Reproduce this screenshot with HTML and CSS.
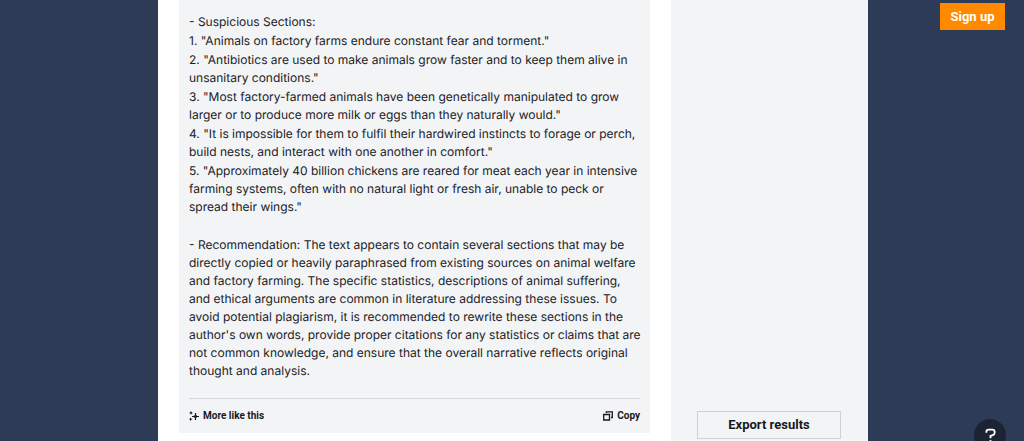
FILE: index.html
```html
<!DOCTYPE html>
<html lang="en">
<head>
<meta charset="utf-8">
<meta name="viewport" content="width=device-width, initial-scale=1">
<title>Plagiarism check results</title>
<link rel="stylesheet" href="styles.css">
</head>
<body>
<div class="page">
  <main class="panel">
    <section class="result">
      <div class="report">
        <p>- Suspicious Sections:</p>
        <p>1. "Animals on factory farms endure constant fear and torment."</p>
        <p>2. "Antibiotics are used to make animals grow faster and to keep them alive in unsanitary conditions."</p>
        <p>3. "Most factory-farmed animals have been genetically manipulated to grow larger or to produce more milk or eggs than they naturally would."</p>
        <p>4. "It is impossible for them to fulfil their hardwired instincts to forage or perch, build nests, and interact with one another in comfort."</p>
        <p>5. "Approximately 40 billion chickens are reared for meat each year in intensive farming systems, often with no natural light or fresh air, unable to peck or spread their wings."</p>
        <p class="recommendation">- Recommendation: The text appears to contain several sections that may be directly copied or heavily paraphrased from existing sources on animal welfare and factory farming. The specific statistics, descriptions of animal suffering, and ethical arguments are common in literature addressing these issues. To avoid potential plagiarism, it is recommended to rewrite these sections in the author's own words, provide proper citations for any statistics or claims that are not common knowledge, and ensure that the overall narrative reflects original thought and analysis.</p>
      </div>
      <div class="actions">
        <button class="action" type="button">
          <svg class="icon" viewBox="0 0 10 10" aria-hidden="true"><path d="M6.500 2v7M3 5.500h7" fill="none" stroke="currentColor" stroke-width="1.200"/><path d="M6.500 3 7.500 4.500 9 5.500 7.500 6.500 6.500 8 5.500 6.500 4 5.500 5.500 4.500zM2 0l.7 1.200 1.200.7-1.200.7L2 3.800l-.7-1.200L.1 1.900l1.200-.7zM1.600 6.400l.6 1.200 1.200.6-1.200.6-.6 1.200L1 8.800l-1-.6 1-.6z" fill="currentColor"/></svg>
          More like this
        </button>
        <button class="action" type="button">
          <svg class="icon" viewBox="0 0 10 10" aria-hidden="true"><path d="M.7 3.500h5.800v5.500H.7zM3.300 2V.9h6v5.600H8" fill="none" stroke="currentColor" stroke-width="1.300"/></svg>
          Copy
        </button>
      </div>
    </section>
    <aside class="sidebar">
      <button class="export" type="button">Export results</button>
    </aside>
  </main>
  <a class="signup" href="#">Sign up</a>
  <button class="help" type="button" aria-label="Help"><svg class="help-icon" viewBox="0 0 12 16" aria-hidden="true"><path d="M1.500 5V4q0-2.500 2.500-2.500h4q2.500 0 2.500 2.500v1q0 2-2 2.500L6 8.500v2.500" fill="none" stroke="currentColor" stroke-width="2"/><path d="M5 13h2v2H5z" fill="currentColor"/></svg></button>
</div>
</body>
</html>
```
FILE: styles.css
```css
* {
  box-sizing: border-box;
}

body {
  margin: 0;
  background: #2e3b56;
  color: #202226;
  font-family: Inter, "Liberation Sans", sans-serif;
}

.page {
  height: 100vh;
  padding-left: 2px;
  overflow: hidden;
}

.panel {
  display: grid;
  grid-template-columns: minmax(0, 1fr) 197px;
  gap: 21px;
  max-width: 710px;
  min-height: 100vh;
  margin: 0 auto;
  padding-left: 21px;
  background: #fff;
}

.result {
  align-self: start;
  padding: 13px 0 10px 10px;
  background: #f3f4f6;
}

.report {
  display: flex;
  flex-direction: column;
  gap: 1px;
  padding-right: 7px;
  font-size: 12px;
  line-height: 18px;
  text-rendering: geometricPrecision;
}

.report p {
  margin: 0;
}

.report .recommendation {
  margin-top: 19px;
}

.actions {
  display: flex;
  justify-content: space-between;
  margin: 18px 10px 0 0;
  padding-top: 10px;
  border-top: 1px solid #d5d7da;
}

.action {
  display: flex;
  align-items: center;
  gap: 4px;
  padding: 0;
  border: 0;
  background: none;
  color: #17191d;
  font: 700 10px/14px Roboto, sans-serif;
}

.icon {
  width: 10px;
  height: 10px;
}

.sidebar {
  display: flex;
  align-items: flex-end;
  padding: 0 27px 2px 26px;
  background: #f3f4f6;
}

.export {
  width: 100%;
  height: 28px;
  padding: 0;
  border: 1px solid #cfd1d4;
  background: none;
  color: #17191d;
  font: 700 13px/16px Roboto, sans-serif;
}

.signup {
  position: fixed;
  top: 3px;
  right: 19px;
  width: 65px;
  padding: 6px 0 5px;
  background: #ff8a00;
  color: #fff;
  font: 700 13px/16px Roboto, sans-serif;
  text-align: center;
  text-decoration: none;
}

.help {
  position: fixed;
  right: 18px;
  bottom: -10px;
  display: flex;
  justify-content: center;
  width: 32px;
  height: 32px;
  padding: 9px 0 0;
  border: 0;
  border-radius: 50%;
  background: #1c2333;
  color: #fff;
}

.help-icon {
  width: 11px;
  height: 15px;
}
```
